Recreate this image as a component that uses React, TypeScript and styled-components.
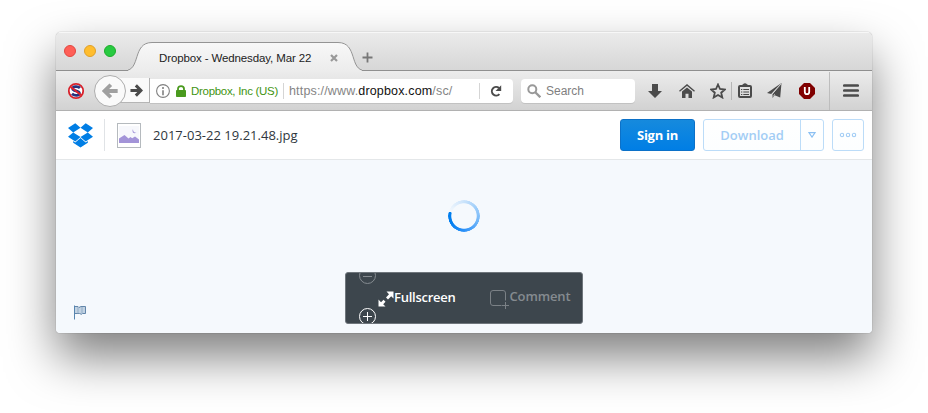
import React from "react";
import styled, { createGlobalStyle } from "styled-components";

const GlobalStyle = createGlobalStyle`
  * { box-sizing: border-box; }
  body { margin: 0; background: #fff; overflow: hidden; }
  svg { display: block; flex: none; }
`;

const Desktop = styled.div`
  width: 928px;
  height: 413px;
  padding: 32px 56px 80px;
  background: #fff;
  overflow: hidden;
`;

const BrowserWindow = styled.div`
  display: flex;
  flex-direction: column;
  height: 301px;
  border-radius: 5px 5px 4px 4px;
  overflow: hidden;
  font-family: "Liberation Sans", Arial, sans-serif;
`;

const WindowShadow = styled.div`
  border-radius: 5px 5px 4px 4px;
  box-shadow: 0 0 1px rgba(0, 0, 0, 0.55), 0 24px 48px rgba(0, 0, 0, 0.5);
`;

const TabStrip = styled.div`
  display: flex;
  flex: none;
  height: 39px;
  background: linear-gradient(#ebebeb, #d6d6d6);
  box-shadow: inset 0 1px #f7f7f7, inset 0 -1px #8f8f8f;
`;

const TrafficLights = styled.div`
  display: flex;
  gap: 8px;
  width: 72px;
  padding: 13px 0 0 8px;
`;

const Light = styled.span<{ $fill: string; $edge: string }>`
  width: 12px;
  height: 12px;
  border-radius: 50%;
  background: ${(p) => p.$fill};
  border: 1px solid ${(p) => p.$edge};
`;

const Tab = styled.div`
  display: grid;
  width: 234px;
  height: 39px;
  > * { grid-area: 1 / 1; }
`;

const TabContent = styled.div`
  z-index: 1;
  display: flex;
  align-items: center;
  padding: 12px 24px 0 31px;
  height: 39px;
  justify-content: space-between;
`;

const Label = styled.span<{ $size: number; $color: string; $width?: number; $spacing?: number }>`
  flex: none;
  width: ${(p) => (p.$width ? `${p.$width}px` : "auto")};
  font-size: ${(p) => p.$size}px;
  letter-spacing: ${(p) => p.$spacing ?? 0}px;
  color: ${(p) => p.$color};
  white-space: nowrap;
  line-height: 16px;
`;

const NewTab = styled.div`
  padding: 20px 0 0;
`;

const Toolbar = styled.div`
  display: flex;
  flex: none;
  align-items: center;
  height: 40px;
  background: linear-gradient(#ececec, #d2d2d2);
  border-bottom: 1px solid #b1b1b1;
`;

const Slot = styled.div<{ $width: number }>`
  display: flex;
  flex: none;
  align-items: center;
  justify-content: center;
  width: ${(p) => p.$width}px;
  height: 39px;
`;

const BackButton = styled.div`
  z-index: 1;
  display: flex;
  flex: none;
  align-items: center;
  justify-content: center;
  width: 32px;
  height: 32px;
  border: 1px solid #adadad;
  border-radius: 50%;
  background: #fafafa;
`;

const ForwardButton = styled.div`
  display: flex;
  flex: none;
  align-items: center;
  justify-content: flex-end;
  width: 34px;
  height: 25px;
  margin-left: -10px;
  padding-right: 6px;
  background: #fafafa;
  border-right: 1px solid #b0b0b0;
  border-bottom: 1px solid #b5b5b5;
`;

const Field = styled.div<{ $width: number; $round: string }>`
  display: flex;
  flex: none;
  align-items: center;
  width: ${(p) => p.$width}px;
  height: 24px;
  background: #fff;
  border-radius: ${(p) => p.$round};
  box-shadow: 0 1px rgba(0, 0, 0, 0.09);
`;

const Separator = styled.span<{ $height: number; $color: string; $margin: string }>`
  flex: none;
  width: 1px;
  height: ${(p) => p.$height}px;
  margin: ${(p) => p.$margin};
  background: ${(p) => p.$color};
`;

const Domain = styled.span`
  color: #111;
`;

const PageHeader = styled.header`
  display: flex;
  flex: none;
  align-items: center;
  height: 49px;
  padding: 0 8px 0 12px;
  background: #fff;
  border-bottom: 1px solid #e4e7e9;
  font-family: "Open Sans", sans-serif;
`;

const Thumbnail = styled.div`
  width: 24px;
  height: 25px;
  margin: 0 12px;
  padding: 1px;
  border: 1px solid #b5babe;
  background: #fff;
`;

const FileName = styled.span`
  flex: 1;
  font-size: 13px;
  letter-spacing: 0.01px;
  color: #30373d;
  white-space: nowrap;
`;

const PageButton = styled.button<{ $width: number; $primary?: boolean; $gap?: number }>`
  display: flex;
  flex: none;
  align-items: center;
  justify-content: center;
  width: ${(p) => p.$width}px;
  height: 32px;
  margin: 0 0 0 ${(p) => p.$gap ?? 0}px;
  padding: 0;
  border: 1px solid ${(p) => (p.$primary ? "#0c71c8" : "#bcdcf8")};
  border-radius: 3px;
  background: ${(p) => (p.$primary ? "linear-gradient(#168add, #007ee5)" : "linear-gradient(#fff, #fcfeff)")};
  color: ${(p) => (p.$primary ? "#fff" : "#a3cdf5")};
  font: 600 13px/18px "Open Sans", sans-serif;
  ${(p) => (p.$primary ? "font-weight: 700; letter-spacing: -0.3px;" : "letter-spacing: 0;")}
`;

const DownloadLabel = styled.span`
  width: 97px;
  text-align: center;
`;

const MenuToggle = styled.span`
  display: flex;
  align-items: center;
  justify-content: center;
  width: 23px;
  height: 30px;
  border-left: 1px solid #bcdcf8;
`;

const Viewer = styled.main`
  display: grid;
  grid-template: 40px 32px 40px 51px 10px / 289px 238px 1fr;
  flex: 1;
  background: #f5f9fd;
  font-family: "Open Sans", sans-serif;
`;

const Spinner = styled.div`
  grid-area: 2 / 2;
  justify-self: center;
  width: 32px;
  height: 32px;
  border-radius: 50%;
  background: conic-gradient(
    from -74deg,
    rgba(0, 126, 245, 0) 0deg,
    rgba(0, 126, 245, 0.16) 70deg,
    rgba(0, 126, 245, 0.5) 175deg,
    #2a90f8 255deg,
    #007ef0 320deg,
    #007eee 359deg,
    rgba(0, 126, 245, 0) 360deg
  );
  mask: radial-gradient(circle, transparent 12.3px, #000 13.1px, #000 15.8px, transparent 16px);
`;

const FlagLink = styled.div`
  grid-area: 4 / 1;
  padding: 33px 0 0 17px;
`;

const Controls = styled.div`
  grid-area: 4 / 2;
  display: flex;
  height: 52px;
  border: 1px solid #6f767c;
  border-radius: 3px;
  background: #3d464d;
  overflow: hidden;
`;

const ZoomColumn = styled.div`
  display: flex;
  flex-direction: column;
  justify-content: space-between;
  width: 18px;
  height: 59px;
  margin: -7px 0 0 12px;
`;

const Action = styled.div<{ $color: string; $left: number; $bold?: boolean }>`
  display: flex;
  align-items: flex-start;
  padding: 15px 0 0;
  margin-left: ${(p) => p.$left}px;
  color: ${(p) => p.$color};
  font-size: 13px;
  font-weight: 600;
  line-height: 18px;
  letter-spacing: ${(p) => (p.$bold ? "-0.26px" : "-0.13px")};
`;

const ActionIcon = styled.span<{ $top: number }>`
  padding-top: ${(p) => p.$top}px;
`;

const ActionText = styled.span<{ $lift?: number }>`
  margin-top: ${(p) => -(p.$lift ?? 0)}px;
`;

const DARK = "#4b4b4b";

const TabShape = () => (
  <svg width="234" height="39" viewBox="0 0 234 39">
    <defs>
      <linearGradient id="tabFill" x1="0" y1="0" x2="0" y2="1">
        <stop offset="0" stopColor="#f8f8f8" />
        <stop offset="1" stopColor="#ececec" />
      </linearGradient>
    </defs>
    <path
      d="M-3 38.5C13 38.5 4 10.5 24 10.5H210C230 10.5 221 38.5 237 38.5V39H-3Z"
      fill="url(#tabFill)"
    />
    <path d="M-3 38.5C13 38.5 4 10.5 24 10.5H210C230 10.5 221 38.5 237 38.5" fill="none" stroke="#949494" />
  </svg>
);

const ScriptBlocker = () => (
  <svg width="18" height="18" viewBox="0 0 18 18">
    <circle cx="9" cy="9" r="7.2" fill="#fff" stroke="#d8222c" strokeWidth="1.8" />
    <path d="M13 6C11 3.8 5.7 4.2 5.7 6.7c0 2.8 6.7 1.6 6.7 4.6 0 2.7-5 2.8-7.4.5" fill="none" stroke="#26357f" strokeWidth="2.8" />
    <path d="m3.8 5 10.4 8.2" stroke="#e0202b" strokeWidth="1.8" />
  </svg>
);

const Arrow = ({ color, flip, size }: { color: string; flip?: boolean; size: number }) => (
  <svg width={size} height={size} viewBox="0 0 14 14">
    <path
      d={flip ? "M0.5 7H11M6.3 1.5 11.8 7 6.3 12.5" : "M13.7 7H3M7.7 1.5 2.2 7 7.7 12.5"}
      fill="none"
      stroke={color}
      strokeWidth="3.3"
    />
  </svg>
);

const InfoIcon = () => (
  <svg width="14" height="14" viewBox="0 0 14 14">
    <circle cx="7" cy="7" r="6.4" fill="none" stroke="#808080" strokeWidth="1.1" />
    <path d="M7 3v2M7 6.2v5" stroke="#808080" strokeWidth="1.6" />
  </svg>
);

const LockIcon = () => (
  <svg width="10" height="12" viewBox="0 0 10 12">
    <rect y="5" width="10" height="7" rx="0.8" fill="#4a9a1e" />
    <path d="M2 6V3.8C2 .1 8 .1 8 3.8V6" fill="none" stroke="#4a9a1e" strokeWidth="1.8" />
  </svg>
);

const ReloadIcon = () => (
  <svg width="12" height="12" viewBox="0 0 12 12">
    <path d="M9.4 9.1A4.3 4.3 0 1 1 9 3" fill="none" stroke={DARK} strokeWidth="2" />
    <path d="M11.2.3V6H5.5Z" fill={DARK} />
  </svg>
);

const SearchIcon = () => (
  <svg width="14" height="14" viewBox="0 0 14 14">
    <circle cx="5.3" cy="5.3" r="4" fill="none" stroke="#999" strokeWidth="2" />
    <path d="m8.3 8.3 5 5" stroke="#999" strokeWidth="2.3" />
  </svg>
);

const DownloadArrow = () => (
  <svg width="14" height="14" viewBox="0 0 14 14">
    <path d="M4 0h6v7h4l-7 7-7-7h4z" fill={DARK} />
  </svg>
);

const HomeIcon = () => (
  <svg width="16" height="14" viewBox="0 0 16 14">
    <path d="M.5 7.2 8 .9l7.5 6.3" fill="none" stroke={DARK} strokeWidth="1.4" />
    <path d="M8 3.4 13 7.6V14H9.5V9.8h-3V14H3V7.6Z" fill={DARK} />
  </svg>
);

const StarIcon = () => (
  <svg width="16" height="16" viewBox="0 0 16 16">
    <path d="m8 1.5 2 4.5 4.9.5-3.7 3.2 1.1 4.8L8 12l-4.3 2.5 1.1-4.8L1.1 6.5 6 6Z" fill="none" stroke={DARK} strokeWidth="1.8" />
  </svg>
);

const ClipboardIcon = () => (
  <svg width="14" height="15" viewBox="0 0 14 15">
    <rect x="1" y="3" width="12" height="11" rx="1" fill="none" stroke={DARK} strokeWidth="2" />
    <path d="M3.5 3.5 5 1.2Q7-.9 9 1.2l1.5 2.3z" fill={DARK} />
    <path d="M3 6.5h1.3M5.3 6.5H11M3 9h1.3M5.3 9H11M3 11.5h1.3M5.3 11.5H11" stroke={DARK} strokeWidth="1.2" />
  </svg>
);

const PlaneIcon = () => (
  <svg width="15" height="15" viewBox="0 0 15 15">
    <path d="M14.5 0 0 10l4.2 1z" fill={DARK} />
    <path d="M14.5 0 5.5 11.2V15l2.2-2.8 5.5 2.2z" fill={DARK} />
    <path d="M14 1 5 11.2" stroke="#ddd" strokeWidth="0.8" />
    <path d="m6.2 13.5 1.6-2.4" stroke="#ddd" strokeWidth="0.7" />
  </svg>
);

const ShieldIcon = () => (
  <svg width="16" height="16" viewBox="0 0 16 16">
    <path d="M5 0h6l5 5v6l-5 5H5l-5-5V5z" fill="#800000" />
    <path d="M5.8 4v5q0 2.2 2.2 2.2T10.2 9V4" fill="none" stroke="#fff" strokeWidth="1.8" />
  </svg>
);

const HamburgerIcon = () => (
  <svg width="16" height="13" viewBox="0 0 16 13">
    <path d="M1.3 1.5h13.4M1.3 6.5h13.4M1.3 11.5h13.4" stroke={DARK} strokeWidth="2.7" strokeLinecap="round" />
  </svg>
);

const DropboxLogo = () => (
  <svg width="25" height="25" viewBox="0 0 26 25" preserveAspectRatio="none">
    <path
      d="M7.6.3 13 4.8 5.4 9.4 0 5.1ZM18.4.3 26 5.1l-5.4 4.3L13 4.8ZM0 13.7l5.4-4.3L13 14.1 7.6 18.5ZM20.6 9.4l5.4 4.3-7.6 4.8L13 14.1Z"
      fill="#007ee5"
    />
    <path d="m13 15 5.4 4.5 2.2-1.4v1.6L13 24.5l-7.6-4.8v-1.6l2.2 1.4Z" fill="#007ee5" />
  </svg>
);

const PictureIcon = () => (
  <svg width="20" height="18" viewBox="0 0 20 18">
    <rect y="1" width="20" height="17" fill="#f7f8fc" />
    <path d="M0 18v-4.5L5.5 10l4 3.5 2-1.5 1.700 1.300L16 11.500l4 3V18Z" fill="#a394d8" />
    <path d="M14 4q-.2 3.500 3.500 3.800-2.400 1-3.600-.3-1-1.800.1-3.500Z" fill="#a394d8" />
  </svg>
);

const ZoomIcon = ({ plus }: { plus?: boolean }) => (
  <svg width="18" height="18" viewBox="0 0 18 18">
    <g stroke={plus ? "#fff" : "#858b90"} fill="none" strokeWidth="1">
      <circle cx="9.5" cy="9.5" r="8" />
      <path d={plus ? "M5 9.5h9M9.5 5v9" : "M5 10.5h9"} />
    </g>
  </svg>
);

const FullscreenIcon = () => (
  <svg width="16" height="16" viewBox="0 0 16 16">
    <path d="M8.5.5h7v7l-2.3-2.3-3.2 3.2-2-2 3-3.200ZM.5 8.500v7h7l-2.300-2.300 2.300-2.500-2-2-2.500 2.500Z" fill="#fff" />
  </svg>
);

const CommentIcon = () => (
  <svg width="19" height="19" viewBox="0 0 19 19">
    <path d="M11.5 15.5H3Q.5 15.5.5 13V3Q.5.5 3 .5h10q2.5 0 2.5 2.5v7.5M15.5 12v7M12 15.5h7" fill="none" stroke="#7b8186" />
  </svg>
);

const FlagIcon = () => (
  <svg width="14" height="15" viewBox="0 0 14 15">
    <path d="M1.5 1.5H5l1 1 2-1h4.500v7H9.500l-1 .8-2-.8h-5Z" fill="#c1d2e2" stroke="#6286aa" />
    <path d="M5 2v6.500M9 2v6.500" stroke="#91adc7" />
    <path d="M1.5.5v14" stroke="#5685b0" />
  </svg>
);

export default function App() {
  return (
    <Desktop>
      <GlobalStyle />
      <WindowShadow>
        <BrowserWindow>
          <TabStrip>
            <TrafficLights>
              <Light $fill="#ff5f57" $edge="#e2463f" />
              <Light $fill="#ffbd2e" $edge="#e0a028" />
              <Light $fill="#28ca41" $edge="#1dad2b" />
            </TrafficLights>
            <Tab>
              <TabShape />
              <TabContent>
                <Label $size={11.5} $color="#222" $spacing={-0.12}>Dropbox - Wednesday, Mar 22</Label>
                <svg width="8" height="8" viewBox="0 0 8 8">
                  <path d="m1 1 6 6M7 1 1 7" stroke="#999" strokeWidth="2.2" />
                </svg>
              </TabContent>
            </Tab>
            <NewTab>
              <svg width="11" height="11" viewBox="0 0 11 11">
                <path d="M5.5.5v10M.5 5.5h10" stroke="#777" strokeWidth="1.8" />
              </svg>
            </NewTab>
          </TabStrip>

          <Toolbar>
            <Slot $width={40}>
              <ScriptBlocker />
            </Slot>
            <Separator $height={1} $color="transparent" $margin="0 0 0 -3px" />
            <BackButton>
              <Arrow color="#a0a0a0" size={16} />
            </BackButton>
            <ForwardButton>
              <Arrow color={DARK} size={13} flip />
            </ForwardButton>
            <Field $width={363} $round="0 4px 4px 0">
              <Slot $width={26}>
                <InfoIcon />
              </Slot>
              <LockIcon />
              <Separator $height={1} $color="transparent" $margin="0 4px 0 0" />
              <Label $size={11.5} $color="#3f9412" $width={92} $spacing={-0.3}>Dropbox, Inc (US)</Label>
              <Separator $height={16} $color="#d5d5d5" $margin="0 5px 0 0" />
              <Label $size={12.5} $color="#858585" $width={190} $spacing={0.16}>
                https://www.<Domain>dropbox.com</Domain>/sc/
              </Label>
              <Separator $height={16} $color="#d5d5d5" $margin="0 10px 0 0" />
              <ReloadIcon />
            </Field>
            <Separator $height={1} $color="transparent" $margin="0 7px 0 0" />
            <Field $width={114} $round="4px">
              <Slot $width={25}>
                <SearchIcon />
              </Slot>
              <Label $size={12} $color="#808080">Search</Label>
            </Field>
            <Slot $width={40}>
              <DownloadArrow />
            </Slot>
            <Slot $width={24}>
              <HomeIcon />
            </Slot>
            <Slot $width={38}>
              <StarIcon />
            </Slot>
            <Separator $height={18} $color="#b5b5b5" $margin="0 0 0 -6px" />
            <Slot $width={26}>
              <ClipboardIcon />
            </Slot>
            <Slot $width={32}>
              <PlaneIcon />
            </Slot>
            <Slot $width={34}>
              <ShieldIcon />
            </Slot>
            <Separator $height={38} $color="#bdbdbd" $margin="0 0 0 5px" />
            <Slot $width={42}>
              <HamburgerIcon />
            </Slot>
          </Toolbar>

          <PageHeader>
            <DropboxLogo />
            <Separator $height={32} $color="#e0e3e6" $margin="0 0 0 11px" />
            <Thumbnail>
              <PictureIcon />
            </Thumbnail>
            <FileName>2017-03-22 19.21.48.jpg</FileName>
            <PageButton $width={75} $primary>Sign in</PageButton>
            <PageButton $width={121} $gap={8}>
              <DownloadLabel>Download</DownloadLabel>
              <MenuToggle>
                <svg width="8" height="6" viewBox="0 0 8 6">
                  <path d="M.9.6h6.2L4 5.1Z" fill="none" stroke="#8cc0f3" strokeWidth="1.2" />
                </svg>
              </MenuToggle>
            </PageButton>
            <PageButton $width={32} $gap={8}>
              <svg width="18" height="6" viewBox="0 0 18 6">
                <g fill="none" stroke="#a3cdf5" strokeWidth="1.1">
                  <circle cx="3" cy="3" r="1.7" />
                  <circle cx="9" cy="3" r="1.7" />
                  <circle cx="15" cy="3" r="1.7" />
                </g>
              </svg>
            </PageButton>
          </PageHeader>

          <Viewer>
            <Spinner />
            <FlagLink>
              <FlagIcon />
            </FlagLink>
            <Controls>
              <ZoomColumn>
                <ZoomIcon />
                <ZoomIcon plus />
              </ZoomColumn>
              <Action $color="#fff" $left={2} $bold>
                <ActionIcon $top={3}>
                  <FullscreenIcon />
                </ActionIcon>
                <ActionText>Fullscreen</ActionText>
              </Action>
              <Action $color="#858b90" $left={35}>
                <ActionIcon $top={2}>
                  <CommentIcon />
                </ActionIcon>
                <ActionText $lift={1}>Comment</ActionText>
              </Action>
            </Controls>
          </Viewer>
        </BrowserWindow>
      </WindowShadow>
    </Desktop>
  );
}
